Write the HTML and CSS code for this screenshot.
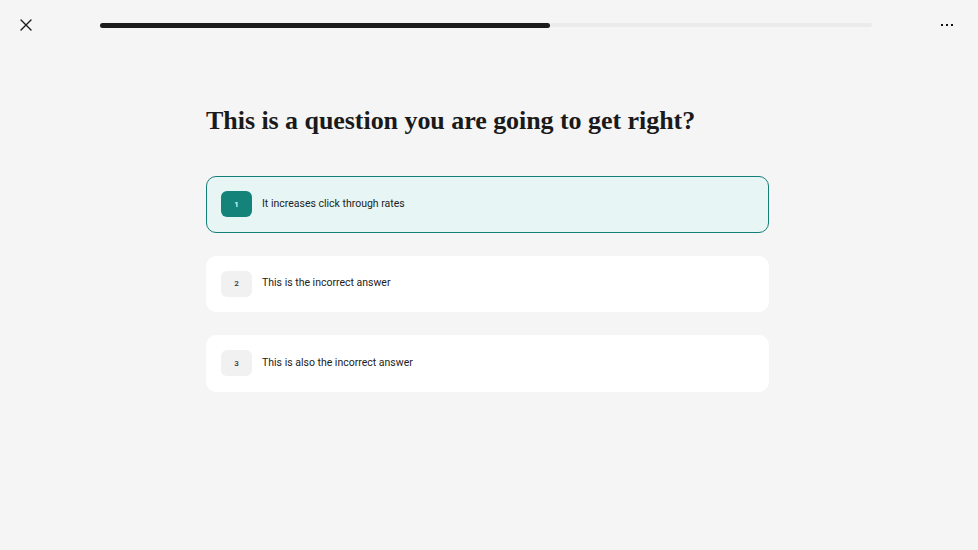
FILE: index.html
```html
<!DOCTYPE html>
<html lang="en">
<head>
    <meta charset="UTF-8">
    <meta name="viewport" content="width=device-width, initial-scale=1.0">
    <title>Quiz</title>
    <link rel="stylesheet" href="styles.css">
</head>
<body>
    <div class="topbar">
        <button class="icon-btn close-btn" aria-label="Close">
            <svg width="12" height="12" viewBox="0 0 12 12">
                <path d="M1 1 L11 11 M11 1 L1 11" stroke="#1a1a1a" stroke-width="1.4" stroke-linecap="round"/>
            </svg>
        </button>
        <div class="progress">
            <div class="progress-fill" style="width: 58.3%"></div>
        </div>
        <button class="icon-btn more-btn" aria-label="More">
            <span class="dot"></span><span class="dot"></span><span class="dot"></span>
        </button>
    </div>

    <div class="quiz">
        <h1 class="question">This is a question you are going to get right?</h1>

        <div class="answers">
            <div class="answer selected">
                <span class="answer-num">1</span>
                <span class="answer-text">It increases click through rates</span>
            </div>
            <div class="answer">
                <span class="answer-num">2</span>
                <span class="answer-text">This is the incorrect answer</span>
            </div>
            <div class="answer">
                <span class="answer-num">3</span>
                <span class="answer-text">This is also the incorrect answer</span>
            </div>
        </div>
    </div>
</body>
</html>
```

FILE: styles.css
```css
body {
    font-family: 'Roboto', sans-serif;
    margin: 0;
    background-color: #f5f5f5;
    color: #1a1a1a;
    height: 550px;
}
.topbar {
    display: flex;
    align-items: center;
    height: 50px;
    padding: 0 21px 0 16px;
}
.icon-btn {
    background: none;
    border: none;
    padding: 0;
    cursor: pointer;
    display: flex;
    align-items: center;
    justify-content: center;
}
.close-btn {
    width: 20px;
    height: 20px;
}
.progress {
    flex: 1;
    height: 4px;
    background: #ebebeb;
    border-radius: 2px;
    margin: 0 65px 0 64px;
}
.progress-fill {
    background: #1c1c1c;
    border-radius: 3px;
    height: 5px;
    margin-top: -0.5px;
}
.more-btn {
    gap: 3px;
    width: 20px;
    height: 20px;
}
.dot {
    width: 2px;
    height: 2px;
    background: #111;
}
.quiz {
    width: 563px;
    margin-left: 206px;
    padding-top: 56px;
}
.question {
    font-family: 'Liberation Serif', serif;
    font-size: 26px;
    font-weight: bold;
    letter-spacing: -0.05px;
    margin: 0 0 40px;
    line-height: 30px;
}
.answers {
    display: flex;
    flex-direction: column;
    gap: 23px;
}
.answer {
    display: flex;
    align-items: center;
    gap: 10px;
    height: 56.5px;
    padding: 0 14px;
    background: white;
    border: 1px solid white;
    border-radius: 10px;
    box-sizing: border-box;
}
.answer.selected {
    background: #e7f6f5;
    border-color: #147f78;
}
.answer-num {
    width: 31px;
    height: 26px;
    border-radius: 6px;
    background: #f1f1f1;
    color: #333;
    font-size: 8px;
    font-weight: 500;
    display: flex;
    align-items: center;
    justify-content: center;
}
.answer.selected .answer-num {
    background: #14837a;
    color: white;
}
.answer-text {
    font-size: 10.5px;
    color: #222;
    margin-top: -2px;
}
```
